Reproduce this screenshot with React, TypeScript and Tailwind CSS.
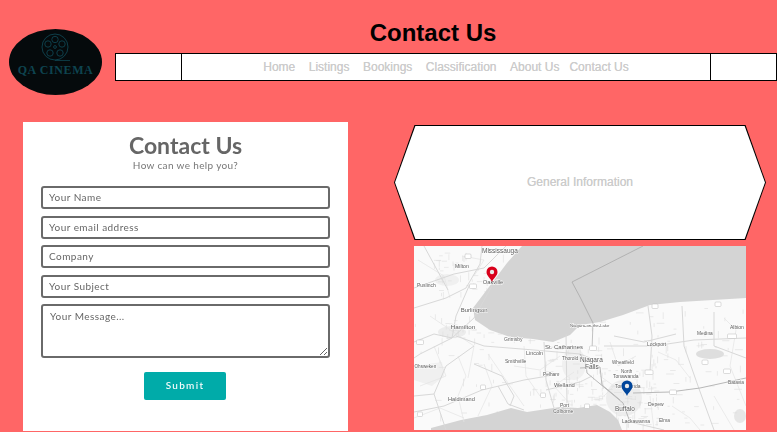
const navLinks = [
  { label: "Home", className: "mr-[13.5px]" },
  { label: "Listings", className: "mr-[13.5px]" },
  { label: "Bookings", className: "mr-[13.5px]" },
  { label: "Classification", className: "mr-[13.5px]" },
  { label: "About Us", className: "mr-[10px]" },
  { label: "Contact Us", className: "" },
];

const fields = ["Your Name", "Your email address", "Company", "Your Subject"];

const roads = [
  "M0 42 L40 28 L70 22 L92 0",
  "M0 62 L32 52 L52 42 L66 18 L68 0",
  "M55 40 L42 70 L38 92 L6 108 L0 112",
  "M38 92 L60 72 L78 40",
  "M42 90 L70 100 L120 104 L166 108 L176 112",
  "M0 150 L20 148 L32 120 L60 100",
  "M20 148 L32 184",
  "M0 166 L30 160 L68 144 L110 134 L146 128",
  "M60 118 L88 130 L100 150 L96 160",
  "M130 96 L132 134 L140 162",
  "M0 96 L20 88 L38 92",
  "M10 0 L34 44",
  "M152 88 L153 158",
  "M234 60 L238 90 L236 126",
  "M268 60 L270 100 L284 140 L300 184",
  "M300 66 L300 100 L332 112",
  "M200 90 L230 96 L262 88",
  "M216 176 L250 184",
  "M190 100 L240 100 L280 94 L332 92",
  "M84 140 L94 158 L110 164",
  "M132 144 L166 136 L178 130",
];

const highways = [
  "M173 127 L209 157",
  "M186 121 L188 139 L206 154",
  "M219 147 L256 146 L286 142 L332 132",
  "M166 108 L172 118 L173 127",
  "M209 157 L216 176",
  "M166 122 L186 121",
];

const thinRoads = [
  "M4 14 L30 30 L36 52",
  "M16 70 L60 100 L54 132",
  "M74 108 L96 140 L110 160",
  "M110 100 L112 130 L126 150",
  "M146 110 L126 124 L100 120",
  "M160 126 L140 140 L156 158",
  "M48 10 L70 14 L60 30",
  "M20 100 L32 130 L6 140",
  "M186 130 L200 140 L190 150",
  "M244 106 L262 114 L276 132",
  "M310 72 L322 84 L316 120 L332 160",
  "M258 160 L276 172 L286 184",
  "M196 96 L204 120 L222 110",
  "M0 172 L26 162 L50 172",
  "M44 110 L52 130 L44 150 L50 176",
  "M70 118 L78 140 L64 170",
  "M236 150 L240 184",
  "M300 150 L320 184",
];

const labels = [
  { text: "Mississauga", x: 68, y: 6.7, size: 6.5 },
  { text: "Milton", x: 41, y: 21.7, size: 5.2 },
  { text: "Oakville", x: 68.7, y: 38, size: 5.8 },
  { text: "Puslinch", x: 3, y: 40.7, size: 5 },
  { text: "Burlington", x: 46.7, y: 66, size: 6 },
  { text: "Hamilton", x: 36.7, y: 82.7, size: 6.2 },
  { text: "Grimsby", x: 90, y: 94.7, size: 5 },
  { text: "Lincoln", x: 112, y: 109, size: 5.4 },
  { text: "Smithville", x: 91, y: 117, size: 5 },
  { text: "Pelham", x: 129, y: 129.7, size: 4.8 },
  { text: "Welland", x: 140, y: 140.7, size: 5.8 },
  { text: "Haldimand", x: 34, y: 155, size: 5.6 },
  { text: "Ohsweken", x: 0.5, y: 122, size: 4.6 },
  { text: "Port", x: 146, y: 160.7, size: 5 },
  { text: "Colborne", x: 139, y: 166.7, size: 5 },
  { text: "St. Catharines", x: 131, y: 103, size: 6 },
  { text: "Thorold", x: 148, y: 114, size: 4.8 },
  { text: "Niagara-on-the-Lake", x: 156, y: 80.7, size: 4.3 },
  { text: "Niagara", x: 166, y: 115.7, size: 6.5 },
  { text: "Falls", x: 171, y: 122.7, size: 6.5 },
  { text: "Wheatfield", x: 198, y: 117.7, size: 4.6 },
  { text: "North", x: 207, y: 126.7, size: 4.6 },
  { text: "Tonawanda", x: 199, y: 132, size: 5 },
  { text: "Tonawanda", x: 201, y: 142, size: 5 },
  { text: "Buffalo", x: 201, y: 164.7, size: 6.4 },
  { text: "Depew", x: 234, y: 160, size: 5 },
  { text: "Lackawanna", x: 208, y: 177, size: 5 },
  { text: "Elma", x: 245, y: 175.7, size: 4.8 },
  { text: "Lockport", x: 233, y: 100, size: 5 },
  { text: "Medina", x: 283, y: 89, size: 4.8 },
  { text: "Albion", x: 316, y: 83, size: 5 },
  { text: "Batavia", x: 314, y: 138, size: 4.8 },
];

const shields = [
  { x: 51, y: 8, w: 6 },
  { x: 55.5, y: 38, w: 7 },
  { x: 2.5, y: 94, w: 7 },
  { x: 66.5, y: 139, w: 5 },
  { x: 126.5, y: 147, w: 5 },
  { x: 3.5, y: 166, w: 5 },
  { x: 238, y: 58, w: 6 },
  { x: 301, y: 56, w: 6 },
  { x: 313.5, y: 88, w: 9 },
  { x: 288, y: 114, w: 6 },
  { x: 309.5, y: 123, w: 7 },
  { x: 231, y: 124, w: 8 },
  { x: 255.5, y: 144, w: 7 },
  { x: 170.5, y: 158, w: 5 },
  { x: 175.5, y: 100, w: 7 },
];

// little street grids around the towns, so the land doesn't look empty
const towns = [
  { x: 20, y: 4, w: 70, h: 44, n: 46 },
  { x: 25, y: 70, w: 50, h: 24, n: 26 },
  { x: 130, y: 96, w: 60, h: 70, n: 70 },
  { x: 185, y: 120, w: 60, h: 60, n: 80 },
  { x: 225, y: 90, w: 30, h: 30, n: 14 },
  { x: 0, y: 60, w: 330, h: 124, n: 140 },
];

let seed = 17;
const rnd = () => {
  seed = (seed * 16807) % 2147483647;
  return seed / 2147483647;
};

const streets = towns.flatMap((t) =>
  Array.from({ length: t.n }, () => {
    const x = t.x + rnd() * t.w;
    const y = t.y + rnd() * t.h;
    const len = 2 + rnd() * 6;
    return rnd() > 0.5 ? `M${x.toFixed(1)} ${y.toFixed(1)} h${len.toFixed(1)}` : `M${x.toFixed(1)} ${y.toFixed(1)} v${len.toFixed(1)}`;
  }),
);

function Pin({ x, y, color }: { x: number; y: number; color: string }) {
  return (
    <g transform={`translate(${x} ${y})`}>
      <path d="M0 0 C-1.5 -4 -5.5 -6 -5.5 -10 A5.5 5.5 0 1 1 5.5 -10 C5.5 -6 1.5 -4 0 0 Z" fill={color} />
      <circle cx="0" cy="-10" r="2.2" fill="#e8e8e8" />
    </g>
  );
}

function MapDrawing() {
  return (
    <svg width="332" height="184" viewBox="0 0 332 184" className="block">
      <g className="blur-[0.4px]">
        <rect width="332" height="184" fill="#fafafa" />
        <path d="M0 120 L28 116 L30 130 L18 140 L0 134 Z" fill="#f0f0f0" />
        <ellipse cx="296" cy="108" rx="14" ry="5" fill="#dedede" />
        <ellipse cx="326" cy="170" rx="6" ry="7" fill="#e6e6e6" />
        <ellipse cx="33" cy="34" rx="12" ry="6" fill="#f0f0f0" />
        <ellipse cx="38" cy="86" rx="14" ry="6" fill="#ececec" />
        <ellipse cx="160" cy="118" rx="12" ry="16" fill="#f0f0f0" />
        <ellipse cx="210" cy="152" rx="18" ry="18" fill="#ededed" />
        <path d={streets.join(" ")} fill="none" stroke="#dedede" strokeWidth="0.6" />
        {/* lakes */}
        <path
          d="M108 0 L93 17 L78 37 L59 62 L61 74 L76 84 L96 91 L119 93 L139 96 L156 89 L166 79 L186 76 L209 69 L236 59 L266 56 L299 54 L332 52 L332 0 Z"
          fill="#d4d4d4"
        />
        <path d="M17 184 L17 182 L47 174 L73 169 L97 162 L113 166 L146 161 L164 162 L183 159 L196 166 L204 174 L208 184 Z" fill="#d4d4d4" />
        {/* border */}
        <path d="M229 0 L158 36 L166 51 L179 77 L178 104" fill="none" stroke="#9a9a9a" strokeWidth="0.6" />
        {/* roads */}
        {thinRoads.map((d) => (
          <path key={d} d={d} fill="none" stroke="#e4e4e4" strokeWidth="0.7" />
        ))}
        {roads.map((d) => (
          <path key={d} d={d} fill="none" stroke="#d8d8d8" strokeWidth="1" />
        ))}
        {highways.map((d) => (
          <path key={d} d={d} fill="none" stroke="#b8b8b8" strokeWidth="1" />
        ))}
        {shields.map((s) => (
          <rect key={`${s.x}-${s.y}`} x={s.x} y={s.y} width={s.w} height="4.5" rx="1" fill="#ffffff" stroke="#b8b8b8" strokeWidth="0.5" />
        ))}
        {labels.map((l) => (
          <text
            key={`${l.text}-${l.y}`}
            x={l.x}
            y={l.y}
            fontSize={l.size}
            fill="#5a5a5a"
            stroke="#ffffff"
            strokeWidth="0.8"
            paintOrder="stroke"
            fontFamily="'Liberation Sans', sans-serif"
          >
            {l.text}
          </text>
        ))}
      </g>
      <Pin x={78} y={36} color="#d9001b" />
      <Pin x={213} y={150} color="#00459b" />
    </svg>
  );
}

function LogoReel() {
  return (
    <svg width="30" height="32" viewBox="0 0 30 32" className="block" fill="none" stroke="#0e4450" strokeWidth="0.9">
      <circle cx="14" cy="14" r="13" />
      <circle cx="14" cy="14" r="1.4" />
      <circle cx="14" cy="6.5" r="3.2" />
      <circle cx="21" cy="11" r="3.2" />
      <circle cx="19" cy="20" r="3.2" />
      <circle cx="9" cy="20" r="3.2" />
      <circle cx="7" cy="11" r="3.2" />
      <path d="M14 27.5 H29" strokeWidth="0.8" />
    </svg>
  );
}

export default function App() {
  return (
    <div className="h-[432px] w-[777px] overflow-hidden bg-[#ff6666] font-['Liberation_Sans',sans-serif]">
      {/* Header */}
      <header className="flex items-start">
        <div className="ml-[9px] mt-[29px] flex h-[66px] w-[93px] shrink-0 flex-col items-center rounded-[50%] bg-[#050a0c] pt-[4px]">
          <LogoReel />
          <span className="mt-[-2px] whitespace-nowrap font-['Liberation_Serif',serif] text-[12px] font-bold leading-[14px] tracking-[0.6px] text-[#0e4450]">
            QA CINEMA
          </span>
        </div>
        <div className="ml-[13px] flex-1">
          <div className="flex h-[53px] items-center justify-center pr-[26px] pt-[13px]">
            <h1 className="text-[24px] font-bold leading-[28px] text-black">Contact Us</h1>
          </div>
          <nav className="grid h-[28px] grid-cols-[66px_1fr_66px] border border-black bg-white">
            <div className="border-r border-black" />
            <div className="flex items-center justify-center">
              {navLinks.map((link) => (
                <a
                  key={link.label}
                  href="#"
                  className={`text-[12px] text-[#cccccc] [text-shadow:0_0_0.5px_#cccccc] ${link.className}`}
                >
                  {link.label}
                </a>
              ))}
            </div>
            <div className="border-l border-black" />
          </nav>
        </div>
      </header>

      <main className="mt-[27px] flex items-start">
        {/* Form */}
        <form className="ml-[23px] flex h-[309px] w-[325px] shrink-0 flex-col items-center bg-white px-[18px] pt-[9px] font-['Lato',sans-serif] blur-[0.4px]">
          <h2 className="text-[23px] font-bold leading-[28px] text-[#666666]">Contact Us</h2>
          <p className="text-[10px] leading-[12px] tracking-[0.35px] text-[#777777]">How can we help you?</p>
          <div className="mt-[15px] flex w-full flex-col gap-[6.5px]">
            {fields.map((field) => (
              <input
                key={field}
                placeholder={field}
                className="h-[23px] w-full rounded-[3px] border-2 border-[#6a6a6a] bg-white px-[6px] pb-[1px] text-[10px] tracking-[0.45px] placeholder:text-[#666666]"
              />
            ))}
            <textarea
              placeholder="Your Message..."
              className="h-[54px] w-full rounded-[3px] border-2 border-[#6a6a6a] bg-white px-[7px] py-[3px] text-[10px] tracking-[0.45px] placeholder:text-[#666666]"
            />
          </div>
          <button
            type="button"
            className="ml-[-1px] mt-[13.5px] h-[28px] w-[82px] rounded-[2px] bg-[#00aba9] text-[10px] font-medium tracking-[1.3px] text-white"
          >
            Submit
          </button>
        </form>

        {/* General information + map */}
        <div className="ml-[46px] mt-[3px] w-[372px] shrink-0">
          <div className="h-[115px] bg-black p-[1px] [clip-path:polygon(5.5%_0,94.5%_0,100%_50%,94.5%_100%,5.5%_100%,0_50%)]">
            <div className="flex h-full items-center justify-center bg-white pb-[2px] text-[12px] text-[#cccccc] [clip-path:polygon(5.5%_0,94.5%_0,100%_50%,94.5%_100%,5.5%_100%,0_50%)] [text-shadow:0_0_0.5px_#cccccc]">
              General Information
            </div>
          </div>
          <div className="ml-[20px] mt-[6px] w-[332px]">
            <MapDrawing />
          </div>
        </div>
      </main>
    </div>
  );
}
